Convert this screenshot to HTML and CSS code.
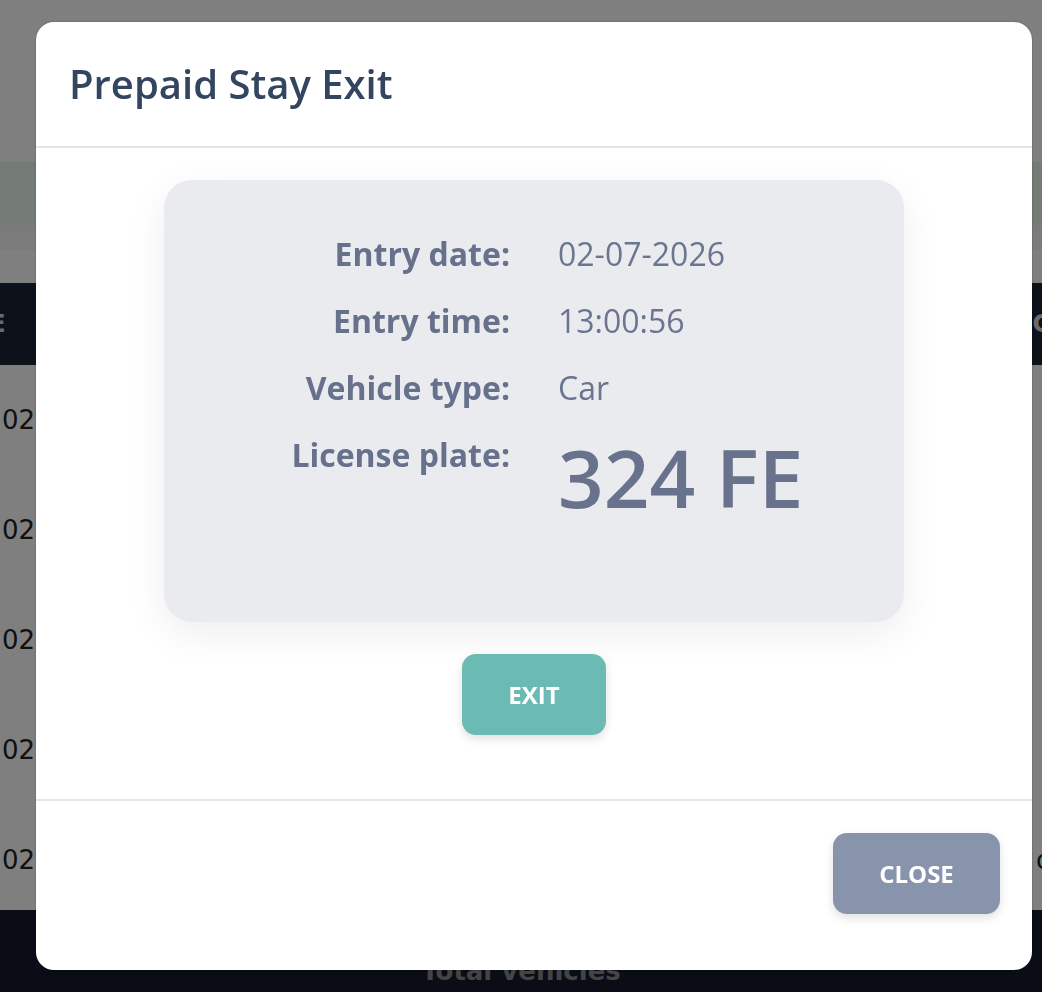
FILE: index.html
```html
<!DOCTYPE html>
<html lang="en">
<head>
  <meta charset="UTF-8" />
  <meta name="viewport" content="width=device-width, initial-scale=1.0"/>
  <title>Prepaid Stay Exit</title>
  <link rel="stylesheet" href="styles.css">
</head>
<body>

<!-- page behind the dialog -->
<div class="page">
  <div class="topbar"></div>
  <div class="notice"></div>
  <div class="filters"></div>
  <div class="filters-2"></div>
  <div class="table-head">
    <span>TYPE</span>
    <span class="right">C</span>
  </div>
  <div class="table-row"><span>02</span></div>
  <div class="table-row"><span>02</span></div>
  <div class="table-row"><span>02</span></div>
  <div class="table-row"><span>02</span></div>
  <div class="table-row"><span>02</span><span class="right">o</span></div>
  <div class="page-footer">Total vehicles</div>
</div>

<!-- Dialog -->
<div class="overlay">
  <div class="modal">
    <div class="modal-header">
      <h1>Prepaid Stay Exit</h1>
    </div>

    <div class="modal-body">
      <div class="ticket">
        <div class="label">Entry date:</div>
        <div class="value">02-07-2026</div>
        <div class="label">Entry time:</div>
        <div class="value">13:00:56</div>
        <div class="label">Vehicle type:</div>
        <div class="value">Car</div>
        <div class="label">License plate:</div>
        <div class="value plate">324 FE</div>
      </div>
      <button class="btn btn-exit">EXIT</button>
    </div>

    <div class="modal-footer">
      <button class="btn btn-close">CLOSE</button>
    </div>
  </div>
</div>

</body>
</html>
```
FILE: styles.css
```css
* {
  box-sizing: border-box;
}

body {
  margin: 0;
  font-family: 'Open Sans', sans-serif;
  background: #fff;
  overflow: hidden;
}

/* background page */
.page {
  height: 992px;
  font-family: 'DejaVu Sans', sans-serif;
}

.topbar {
  height: 162px;
  background: #fff;
}

.notice {
  height: 63px;
  background: #ebf8eb;
}

.filters {
  height: 25px;
  background: #f6f6f6;
}

.filters-2 {
  height: 33px;
  background: #fefefe;
}

.table-head {
  height: 82px;
  background: #1a2234;
  color: #d0d4dc;
  display: flex;
  justify-content: space-between;
  align-items: center;
  font-size: 24px;
  font-weight: bold;
  margin-left: -62px;
  margin-right: -8px;
}

.table-row {
  height: 110px;
  display: flex;
  justify-content: space-between;
  align-items: center;
  font-size: 26px;
  color: #222;
  padding-left: 2px;
  margin-right: -10px;
}

.page-footer {
  height: 82px;
  margin-top: -5px;
  background: #141a2c;
  color: #888;
  text-align: center;
  font-size: 26px;
  font-weight: bold;
  padding-top: 46px;
}

/* dialog */
.overlay {
  position: fixed;
  inset: 0;
  background: rgba(0, 0, 0, 0.5);
  padding: 22px 0 0 36px;
}

.modal {
  width: 996px;
  height: 948px;
  background: #fff;
  border-radius: 18px;
  box-shadow: 0 0 2px rgba(0,0,0,0.35);
  display: flex;
  flex-direction: column;
  overflow: hidden;
}

.modal-header {
  height: 126px;
  padding: 0 33px;
  display: flex;
  align-items: center;
  border-bottom: 2px solid #e2e5ea;
}

.modal-header h1 {
  margin: 0 0 2px;
  font-size: 40px;
  font-weight: 600;
  color: #34455f;
}

.modal-body {
  padding: 32px 0 64px;
  display: flex;
  flex-direction: column;
  align-items: center;
  border-bottom: 2px solid #e3e6ea;
}

.ticket {
  width: 740px;
  background: #e9ebef;
  border-radius: 28px;
  box-shadow: 0 12px 40px rgba(0, 0, 0, 0.07);
  padding: 50px 0 99px;
  display: grid;
  grid-template-columns: 1fr 1fr;
  column-gap: 48px;
  row-gap: 19px;
  align-items: start;
}

.label {
  text-align: right;
  font-size: 32px;
  line-height: 48px;
  font-weight: 700;
  color: #67718b;
}

.value {
  font-size: 32px;
  line-height: 48px;
  color: #6a7590;
}

.value.plate {
  font-size: 80px;
  line-height: 92px;
  font-weight: 600;
  color: #68728c;
}

.btn {
  border: none;
  border-radius: 14px;
  color: #fff;
  font-family: 'Open Sans', sans-serif;
  font-size: 24px;
  font-weight: 700;
  height: 81px;
  cursor: pointer;
  box-shadow: 0 4px 10px rgba(0, 0, 0, 0.12);
}

.btn-exit {
  margin-top: 32px;
  width: 144px;
  background: #6bbab4;
}

.modal-footer {
  padding: 32px 32px;
  display: flex;
  justify-content: flex-end;
}

.btn-close {
  width: 167px;
  background: #8794ab;
}
```
